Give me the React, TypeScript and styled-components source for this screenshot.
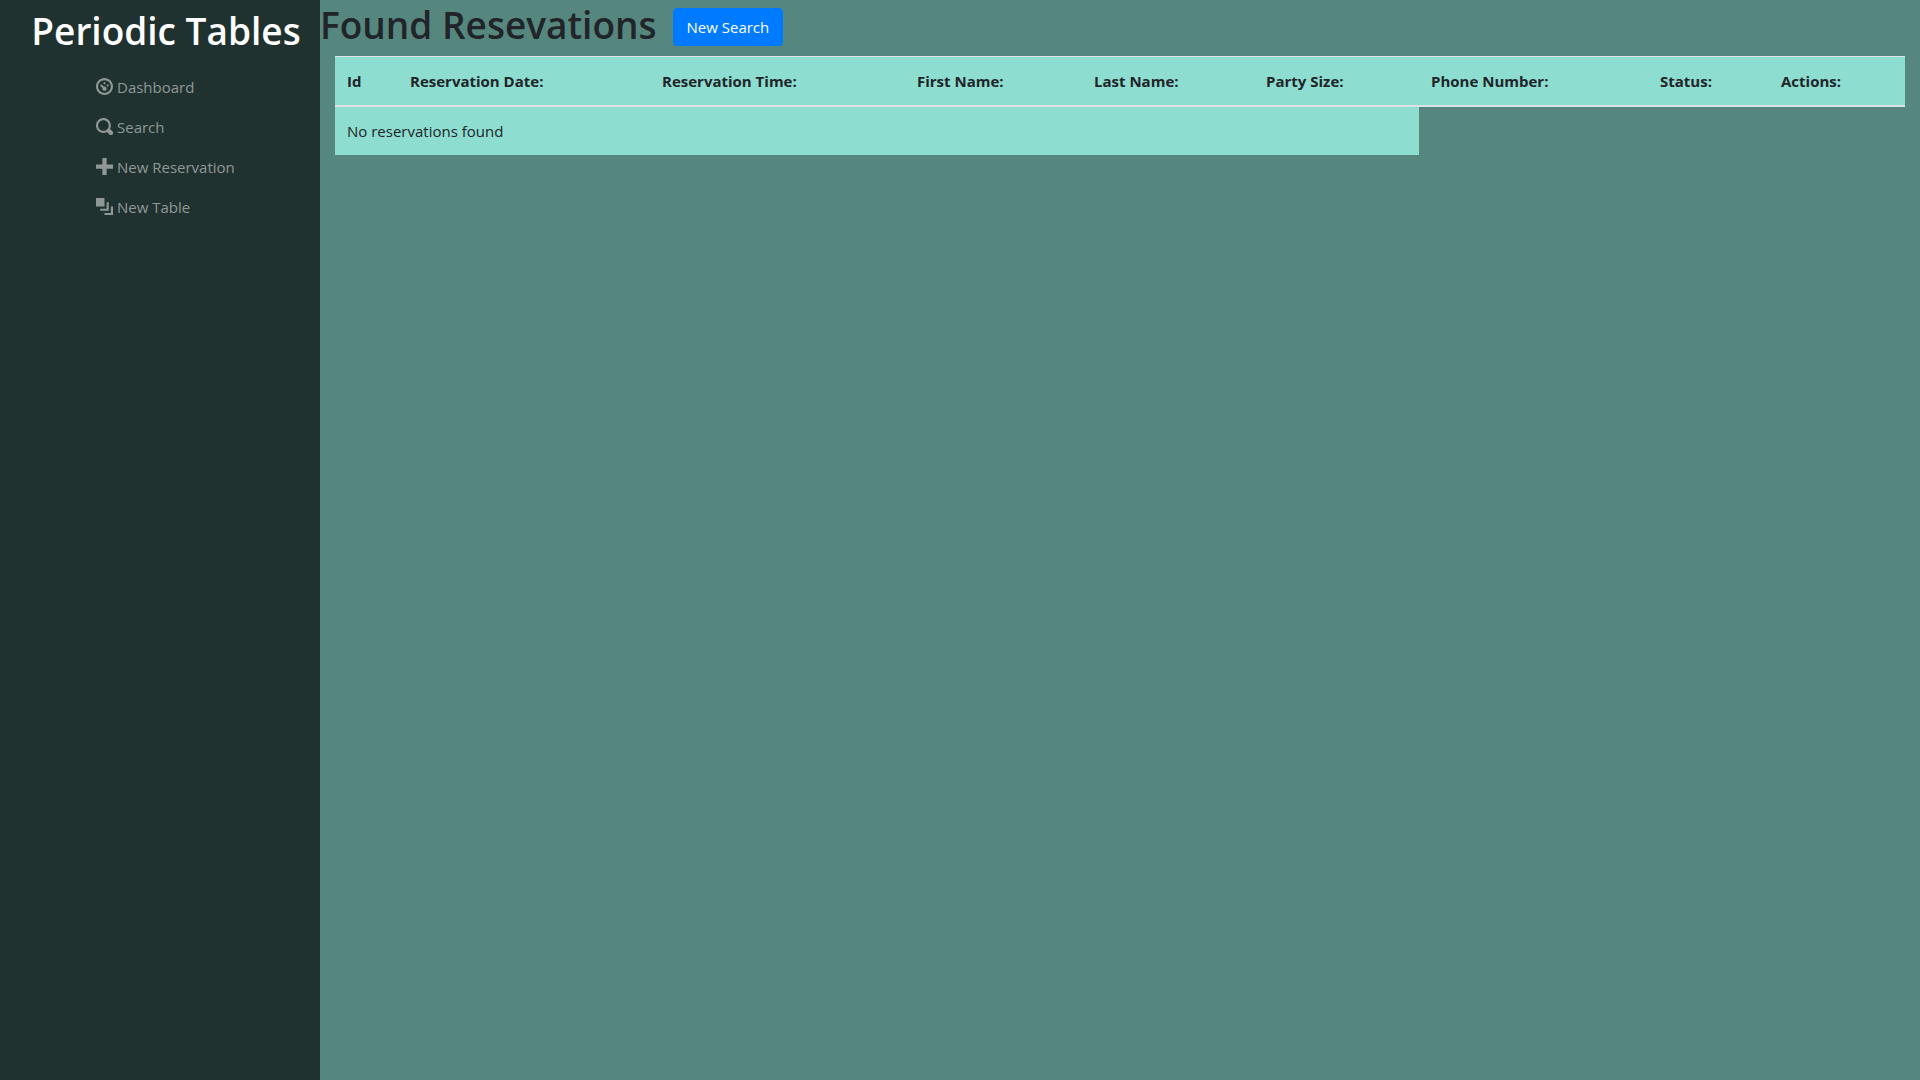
import React from "react";
import styled, { createGlobalStyle } from "styled-components";

const GlobalStyle = createGlobalStyle`
  *, *::before, *::after { box-sizing: border-box; }
  body {
    margin: 0;
    background: #56877f;
    color: #212529;
    font-family: "Segoe UI", "Open Sans", "Noto Sans", sans-serif;
    font-size: 15px;
    line-height: 24px;
  }
`;

const Layout = styled.div`
  display: grid;
  grid-template-columns: minmax(0, 1fr) minmax(0, 5fr);
  min-height: 100vh;
`;

const Sidebar = styled.nav`
  display: flex;
  flex-direction: column;
  padding-top: 6px;
  background: #203230;
`;

const Brand = styled.a`
  padding-left: 12px;
  color: #fff;
  font-size: 37px;
  font-weight: 600;
  line-height: 50px;
  text-align: center;
  text-decoration: none;
  white-space: nowrap;
`;

const NavList = styled.ul`
  margin: 11px 0 0;
  padding: 0 0 0 96px;
  list-style: none;
`;

const NavLink = styled.a`
  display: flex;
  gap: 4px;
  padding: 8px 0;
  color: #909897;
  text-decoration: none;
  white-space: nowrap;
`;

const Icon = styled.svg`
  flex: none;
  width: 17px;
  height: 17px;
  margin-top: 3px;
  fill: currentColor;
`;

const Header = styled.header`
  display: flex;
  align-items: flex-start;
  gap: 16px;
  padding-bottom: 6px;
`;

const Title = styled.h1`
  margin: 0;
  font-size: 37px;
  font-weight: 600;
  line-height: 50px;
  white-space: nowrap;
`;

const SearchButton = styled.button`
  height: 38px;
  margin-top: 8px;
  padding: 0 13px;
  border: 1px solid #007bff;
  border-radius: 4px;
  background: #007bff;
  color: #fff;
  font: inherit;
  cursor: pointer;
`;

const TableWrap = styled.div`
  padding: 0 15px;
`;

const Table = styled.table`
  width: 100%;
  table-layout: fixed;
  border-collapse: separate;
  border-spacing: 0;
`;

const Column = styled.col<{ $width: number }>`
  width: ${(p) => p.$width}px;
`;

const HeadCell = styled.th`
  padding: 12px;
  border-top: 1px solid #dee2e6;
  border-bottom: 2px solid #dee2e6;
  background: #8dddd0;
  font-weight: 700;
  text-align: left;
  white-space: nowrap;
`;

const Cell = styled.td`
  padding: 12px;
  background: #8dddd0;
`;

const links = [
  {
    label: "Dashboard",
    path: "M4 0c-2.2 0-4 1.8-4 4s1.8 4 4 4 4-1.8 4-4-1.8-4-4-4zm0 1c1.66 0 3 1.34 3 3s-1.34 3-3 3-3-1.34-3-3 1.34-3 3-3zm0 1c-.28 0-.5.22-.5.5s.22.5.5.5.5-.22.5-.5-.22-.5-.5-.5zm-1.5 1a.5.5 0 0 0-.35.84l.91.91c-.02.08-.06.16-.06.25 0 .55.45 1 1 1s1-.45 1-1-.45-1-1-1c-.09 0-.17.04-.25.06l-.91-.91a.5.5 0 0 0-.34-.15zm3 0c-.28 0-.5.22-.5.5s.22.5.5.5.5-.22.5-.5-.22-.5-.5-.5z",
  },
  {
    label: "Search",
    path: "M3.5 0c-1.93 0-3.5 1.57-3.5 3.5s1.57 3.5 3.5 3.5c.59 0 1.17-.14 1.66-.41a1 1 0 0 0 .13.13l1 1a1.02 1.02 0 1 0 1.44-1.44l-1-1a1 1 0 0 0-.16-.13c.27-.49.44-1.06.44-1.66 0-1.93-1.55-3.5-3.5-3.5zm0 1c1.39 0 2.5 1.1 2.5 2.5 0 .66-.24 1.27-.66 1.72l-.03.03a1 1 0 0 0-.13.13c-.44.4-1.04.63-1.69.63-1.39 0-2.5-1.1-2.5-2.5s1.1-2.5 2.5-2.5z",
  },
  { label: "New Reservation", path: "M3 0v3h-3v2h3v3h2v-3h3v-2h-3v-3h-2z" },
  {
    label: "New Table",
    path: "M0 0v4h4v-4h-4zm5 2v3h-3v1h4v-4h-1zm2 2v3h-3v1h4v-4h-1z",
  },
];

const columns = [
  { label: "Id", width: 63 },
  { label: "Reservation Date:", width: 252 },
  { label: "Reservation Time:", width: 255 },
  { label: "First Name:", width: 177 },
  { label: "Last Name:", width: 172 },
  { label: "Party Size:", width: 165 },
  { label: "Phone Number:", width: 229 },
  { label: "Status:", width: 121 },
  { label: "Actions:", width: 136 },
];

export default function App() {
  return (
    <>
      <GlobalStyle />
      <Layout>
        <Sidebar>
          <Brand href="#">Periodic Tables</Brand>
          <NavList>
            {links.map((link) => (
              <li key={link.label}>
                <NavLink href="#">
                  <Icon viewBox="0 0 8 8" aria-hidden="true">
                    <path d={link.path} />
                  </Icon>
                  {link.label}
                </NavLink>
              </li>
            ))}
          </NavList>
        </Sidebar>
        <main>
          <Header>
            <Title>Found Resevations</Title>
            <SearchButton type="button">New Search</SearchButton>
          </Header>
          <TableWrap>
            <Table>
              <colgroup>
                {columns.map((c) => (
                  <Column key={c.label} $width={c.width} />
                ))}
              </colgroup>
              <thead>
                <tr>
                  {columns.map((c) => (
                    <HeadCell key={c.label} scope="col">
                      {c.label}
                    </HeadCell>
                  ))}
                </tr>
              </thead>
              <tbody>
                <tr>
                  <Cell colSpan={6}>No reservations found</Cell>
                </tr>
              </tbody>
            </Table>
          </TableWrap>
        </main>
      </Layout>
    </>
  );
}
